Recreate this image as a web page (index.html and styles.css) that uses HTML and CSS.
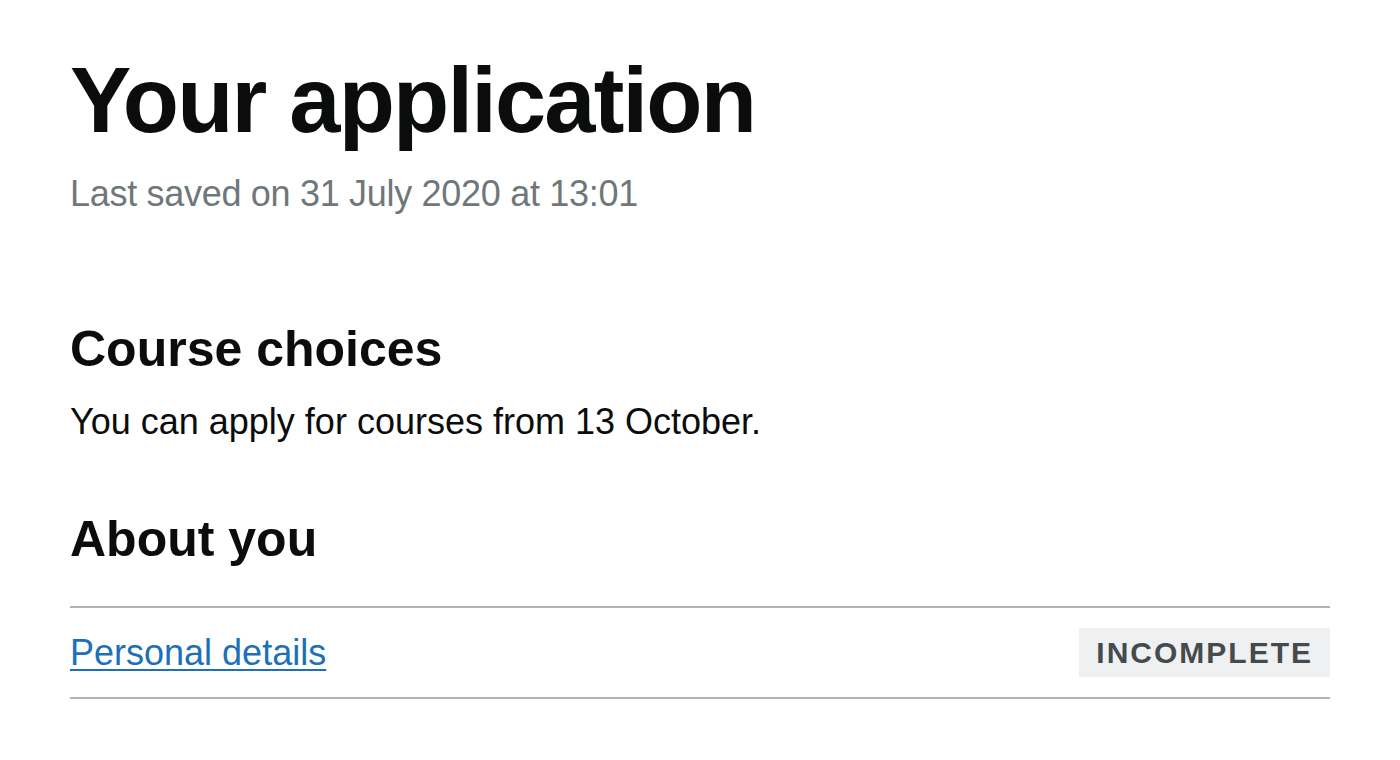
FILE: index.html
```html
<!DOCTYPE html>
<html lang="en">
<head>
<meta charset="utf-8">
<title>Your application</title>
<link rel="stylesheet" href="styles.css">
</head>
<body>
<main class="page">
  <h1 class="title">Your application</h1>
  <p class="saved">Last saved on 31 July 2020 at 13:01</p>

  <h2 class="heading heading-course">Course choices</h2>
  <p class="body-text">You can apply for courses from 13 October.</p>

  <h2 class="heading heading-about">About you</h2>
  <ul class="task-list">
    <li class="task-item">
      <a class="task-link" href="#">Personal details</a>
      <strong class="tag">Incomplete</strong>
    </li>
  </ul>
</main>
</body>
</html>
```

FILE: styles.css
```css
html, body {
  margin: 0;
  padding: 0;
  background: #ffffff;
}

body {
  font-family: "Liberation Sans", Arial, sans-serif;
  color: #0b0c0c;
}

.page {
  width: 1260px;
  padding: 54px 70px 0 70px;
  display: flex;
  flex-direction: column;
}

.title {
  margin: 0;
  font-size: 92px;
  line-height: 92px;
  font-weight: 700;
  letter-spacing: -1.8px;
}

.saved {
  margin: 30px 0 0 0;
  font-size: 36px;
  line-height: 36px;
  color: #6f777b;
  letter-spacing: -0.3px;
}

.heading {
  margin: 0;
  font-size: 50px;
  line-height: 50px;
  font-weight: 700;
}

.heading-course {
  margin-top: 112px;
}

.body-text {
  margin: 30px 0 0 0;
  font-size: 36px;
  line-height: 36px;
}

.heading-about {
  margin-top: 74px;
}

.task-list {
  list-style: none;
  margin: 42px 0 0 0;
  padding: 0;
  border-top: 2px solid #b1b4b6;
}

.task-item {
  display: flex;
  align-items: center;
  justify-content: space-between;
  padding: 20px 0;
  border-bottom: 2px solid #b1b4b6;
}

.task-link {
  font-size: 36px;
  line-height: 36px;
  color: #1d70b8;
  text-decoration: underline;
  text-decoration-thickness: 2px;
  text-underline-offset: 4px;
}

.tag {
  display: inline-block;
  padding: 10px 17px 9px 17px;
  font-size: 30px;
  line-height: 30px;
  font-weight: 700;
  letter-spacing: 2px;
  text-transform: uppercase;
  color: #454a4d;
  background: #eff0f1;
}
```
